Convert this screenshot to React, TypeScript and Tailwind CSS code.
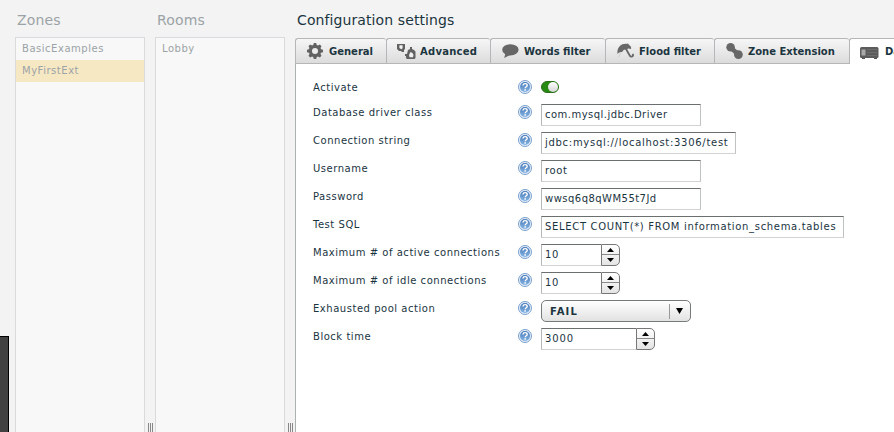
import React from "react";

function Help() {
  return (
    <svg className="mt-[1px] h-[14px] w-[14px] shrink-0" viewBox="0 0 14 14">
      <defs>
        <linearGradient id="help" x1="0" y1="0" x2="0" y2="1">
          <stop offset="0" stopColor="#4779b8" />
          <stop offset="1" stopColor="#86b4e2" />
        </linearGradient>
      </defs>
      <circle cx="7" cy="7" r="6.5" fill="#e2edf9" stroke="#7c9fcd" strokeWidth="1" />
      <circle cx="7" cy="7" r="5" fill="url(#help)" />
      <path d="M5 5.6c0-2.7 4.2-2.5 4.2-.2 0 1.4-2 1.4-2 2.9" fill="none" stroke="#fff" strokeWidth="1.4" />
      <rect x="6.4" y="9.2" width="1.5" height="1.5" fill="#fff" />
    </svg>
  );
}

function Gear() {
  return (
    <svg className="h-4 w-4 shrink-0" viewBox="0 0 16 16">
      <g fill="#626262">
        {[0, 45, 90, 135].map((a) => (
          <path key={a} d="M6.8 0h2.4l.8 3v10l-.8 3H6.8L6 13V3z" transform={`rotate(${a} 8 8)`} />
        ))}
        <circle cx="8" cy="8" r="6.2" />
      </g>
      <circle cx="8" cy="8" r="3" fill="#ececec" />
    </svg>
  );
}

function Gears() {
  return (
    <svg className="h-4 w-[19px] shrink-0" viewBox="0 0 19 16">
      <path d="M0 1h8v5L7 7v2H5L4 8H2L0 6z" fill="#626262" />
      <path d="M2.4 2.3h3.2v3L4.2 6.2 2.4 5z" fill="#f2f2f2" />
      <path d="M11 7l2-1V4h2v2l2 1 1.5 1.5V15l-1 1H10l-1-1v-2H8v-2h2z" fill="#626262" />
      <path d="M13.5 9l2 1 1 2-.5 2.2h-3.5L12 12z" fill="#efefef" />
    </svg>
  );
}

function Bubble() {
  return (
    <svg className="h-4 w-[17px] shrink-0" viewBox="0 0 17 16">
      <ellipse cx="8.4" cy="6.8" rx="8.2" ry="5.6" fill="#666" />
      <path d="M3.4 10.5L2.2 15 8 12z" fill="#666" />
    </svg>
  );
}

function Umbrella() {
  return (
    <svg className="h-4 w-[17px] shrink-0" viewBox="0 0 17 16">
      <path d="M.5 11C-.5 4 5 0 10 1l1-.8.6 1.2C14 3 14.5 4.5 14 6c-2-1-3.3-.8-4.2.6C7.7 6 5.7 6.7 5.3 9 3.3 8.6 1.6 9.2.5 11z" fill="#686868" />
      <path d="M8.5 5l4.2 7.5c1.3 2.3 4.2.7 3-1.6" fill="none" stroke="#686868" strokeWidth="1.8" />
      <path d="M4 9.5L1.8 14" stroke="#c9c9c9" strokeWidth=".8" />
    </svg>
  );
}

function Link() {
  return (
    <svg className="h-4 w-[17px] shrink-0" viewBox="0 0 17 16">
      <path d="M4.5 4.5l8 7" stroke="#686868" strokeWidth="4.4" />
      <circle cx="4.6" cy="4.3" r="4.3" fill="#686868" />
      <circle cx="12.4" cy="11.6" r="4.4" fill="#686868" />
    </svg>
  );
}

function Database() {
  return (
    <svg className="mt-[3px] h-3 w-[19px] shrink-0" viewBox="0 0 19 12">
      <rect x="2" y="10" width="3" height="2" fill="#555" />
      <rect x="14" y="10" width="3" height="2" fill="#555" />
      <rect x="0" y="0" width="18.5" height="11" rx="1.5" fill="#5c5c5c" />
      <rect x="1.5" y="2.5" width="4" height="6" fill="#a9a9a9" />
      <path d="M7 2.5h10M7 5.5h10M7 8.5h10" stroke="#6d6d6d" />
    </svg>
  );
}

const tabs = [
  { label: "General", icon: <Gear />, box: "w-[91px] pl-[11px] gap-[6px]" },
  { label: "Advanced", icon: <Gears />, box: "w-[104px] pl-[10px] gap-[4px] tracking-[0.25px]" },
  { label: "Words filter", icon: <Bubble />, box: "w-[115px] pl-[11px] gap-[5px]" },
  { label: "Flood filter", icon: <Umbrella />, box: "w-[109px] pl-[11px] gap-[5px]" },
  { label: "Zone Extension", icon: <Link />, box: "w-[135px] pl-[11px] gap-[5px]" },
];

function Arrow({ down = false }: { down?: boolean }) {
  return (
    <svg className="h-[4px] w-[7px]" viewBox="0 0 7 4">
      <path d={down ? "M0 0h7L3.5 4z" : "M0 4h7L3.5 0z"} fill="#000" />
    </svg>
  );
}

const fieldBorder = "border border-t-[#6c6f70] border-l-[#b5b8b9] border-r-[#bfc2c3] border-b-[#d0d2d3] bg-white";

function TextField({ value, box }: { value: string; box: string }) {
  return <div className={`h-[22px] pl-[3px] leading-[20px] whitespace-nowrap ${fieldBorder} ${box}`}>{value}</div>;
}

function Stepper({ value, box }: { value: string; box: string }) {
  return (
    <div className="flex">
      <TextField value={value} box={box} />
      <div className="flex h-[22px] w-[19px] flex-col overflow-hidden rounded-r-[5px] border border-[#777] bg-gradient-to-b from-white to-[#e4e4e4]">
        <div className="flex h-[10px] items-center justify-center border-b border-[#888]"><Arrow /></div>
        <div className="flex h-[10px] items-center justify-center"><Arrow down /></div>
      </div>
    </div>
  );
}

const rows = [
  { label: "Database driver class", field: <TextField value="com.mysql.jdbc.Driver" box="w-[160px] tracking-[0.47px]" /> },
  { label: "Connection string", field: <TextField value="jdbc:mysql://localhost:3306/test" box="w-[195px] tracking-[0.71px]" /> },
  { label: "Username", field: <TextField value="root" box="w-[160px] tracking-[0.6px]" /> },
  { label: "Password", field: <TextField value="wwsq6q8qWM55t7Jd" box="w-[160px] tracking-[0.47px]" /> },
  { label: "Test SQL", field: <TextField value="SELECT COUNT(*) FROM information_schema.tables" box="w-[303px] tracking-[0.67px]" /> },
  { label: "Maximum # of active connections", field: <Stepper value="10" box="w-[60px] border-r-0 tracking-[0.6px]" /> },
  { label: "Maximum # of idle connections", field: <Stepper value="10" box="w-[60px] border-r-0 tracking-[0.6px]" /> },
  {
    label: "Exhausted pool action",
    field: (
      <div className="flex h-[22px] w-[150px] items-center rounded-[5px] border border-[#777a7b] bg-gradient-to-b from-white to-[#e2e2e2] pl-2 font-bold">
        <span className="flex-1 tracking-[1.1px]">FAIL</span>
        <span className="h-[15px] w-px bg-[#999]" />
        <span className="flex w-[20px] justify-center pr-[2px]">
          <svg className="h-[6px] w-[7px]" viewBox="0 0 7 6"><path d="M0 0h7L3.5 6z" /></svg>
        </span>
      </div>
    ),
  },
  { label: "Block time", field: <Stepper value="3000" box="w-[95px] border-r-0 tracking-[0.85px]" /> },
];

function ListPanel({ title, items, selected }: { title: string; items: string[]; selected?: number }) {
  return (
    <section className="flex w-[130px] flex-col text-[#9ba3a6]">
      <h2 className="h-[37px] pt-[10px] pl-[2px] text-[14px] leading-[20px] tracking-[0.15px]">{title}</h2>
      <div className="flex-1 border border-b-0 border-[#d8dadb] bg-[#f8f8f8]">
        {items.map((t, i) => (
          <div key={t} className={`h-[22px] pl-[6px] leading-[22px] ${i === selected ? "bg-[#f7e8c4]" : ""}`}>{t}</div>
        ))}
      </div>
    </section>
  );
}

function Grip() {
  return (
    <div className="flex w-[10px] items-end justify-center gap-px">
      <span className="h-[9px] w-px bg-[#888]" />
      <span className="h-[9px] w-px bg-[#888]" />
      <span className="h-[9px] w-px bg-[#888]" />
    </div>
  );
}

export default function App() {
  return (
    <main className="flex h-[432px] w-[894px] overflow-hidden bg-[#f3f3f3] font-['DejaVu_Sans',Verdana,sans-serif] text-[10px] tracking-[0.53px] text-[#1b353f]">
      <div className="flex w-[15px] items-end">
        <div className="h-[96px] w-[9px] border-t border-r border-black bg-[#414141]" />
      </div>
      <ListPanel title="Zones" items={["BasicExamples", "MyFirstExt"]} selected={1} />
      <Grip />
      <ListPanel title="Rooms" items={["Lobby"]} />
      <Grip />
      <section className="flex w-[599px] flex-col">
        <h2 className="h-[38px] pt-[10px] pl-[2px] text-[14px] leading-[20px] tracking-[0.1px]">Configuration settings</h2>
        <nav className="flex h-[26px] font-bold tracking-normal">
          {tabs.map((t) => (
            <div key={t.label} className={`flex shrink-0 items-center rounded-t-[3px] border border-r-0 border-[#b4b6b7] bg-gradient-to-b from-[#f6f6f6] to-[#dcdcdc] whitespace-nowrap ${t.box}`}>
              {t.icon}
              <span>{t.label}</span>
            </div>
          ))}
          <div className="flex min-w-0 flex-1 items-center gap-[6px] overflow-hidden rounded-tl-[3px] border-t border-l border-[#b4b6b7] bg-white pl-[10px]">
            <Database />
            <span className="whitespace-nowrap">Database</span>
          </div>
        </nav>
        <div className="flex-1 border-l border-[#aeb1b2] bg-white pt-[14px] pl-[17px]">
          <div className="flex h-[26px] leading-[18px]">
            <span className="w-[205px] pt-[1px]">Activate</span>
            <span className="pt-[1px]"><Help /></span>
            <div className="mt-[3px] ml-[9px] flex h-[12px] w-[18px] justify-end rounded-full border border-[#2c6e1c] bg-[#288a12]">
              <span className="h-[10px] w-[10px] rounded-full bg-gradient-to-b from-white to-[#d6d6d6]" />
            </div>
          </div>
          {rows.map((r) => (
            <div key={r.label} className="flex h-[28px]">
              <span className="w-[205px] leading-[18px] whitespace-nowrap">{r.label}</span>
              <Help />
              <div className="ml-[9px]">{r.field}</div>
            </div>
          ))}
        </div>
      </section>
    </main>
  );
}
